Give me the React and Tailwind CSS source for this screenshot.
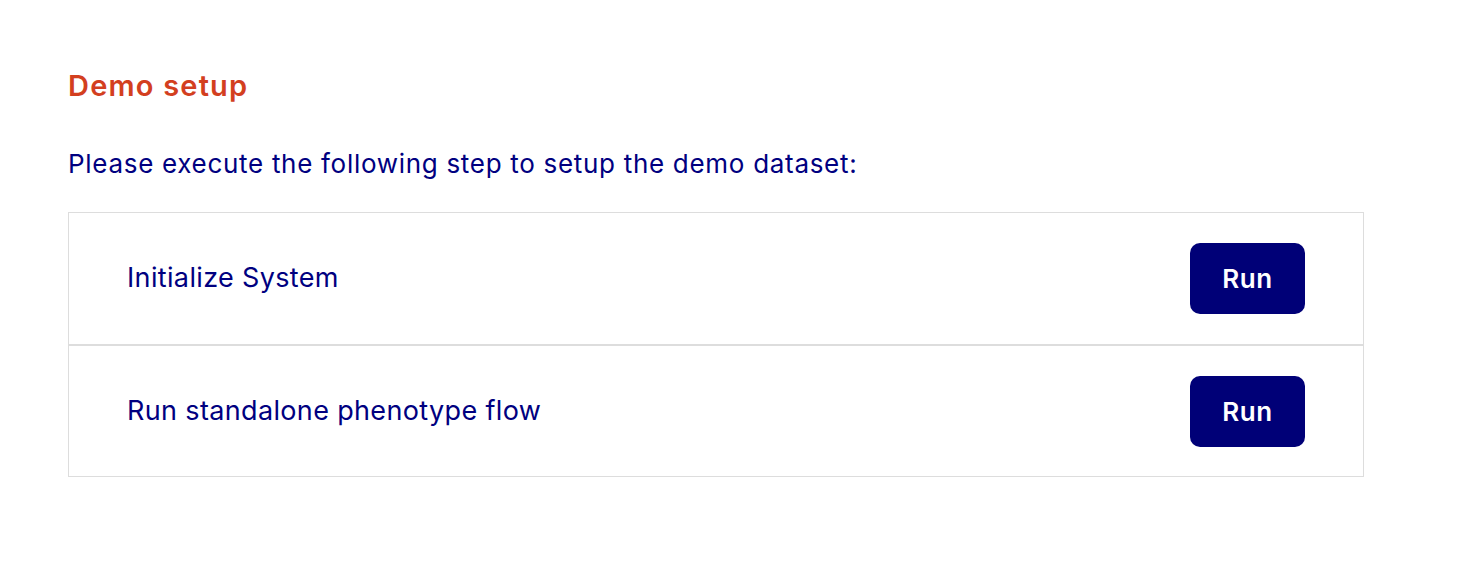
const steps = ["Initialize System", "Run standalone phenotype flow"];

export default function App() {
  return (
    <div className="min-h-screen bg-white font-['Inter',sans-serif] text-[#000080]">
      <div className="pl-[68px] pr-[102px] pt-[68px]">
        <h2 className="text-[29px] font-semibold leading-[36px] tracking-[1.2px] text-[#d33f1f]">Demo setup</h2>
        <p className="mt-[44px] text-[26px] leading-[32px] tracking-[0.7px]">
          Please execute the following step to setup the demo dataset:
        </p>
        <div className="mt-[32px] border border-[#dddddd]">
          {steps.map((s, i) => (
            <div
              key={s}
              className={
                "flex h-[131px] items-center justify-between pl-[58px] pr-[58px] " +
                (i > 0 ? "h-[132px] border-t-2 border-[#dddddd]" : "")
              }
            >
              <span className="text-[27px] tracking-[0.35px]">{s}</span>
              <button className="h-[71px] w-[115px] rounded-[10px] bg-[#000077] text-[26px] font-semibold tracking-[0.6px] text-white">
                Run
              </button>
            </div>
          ))}
        </div>
      </div>
    </div>
  );
}
